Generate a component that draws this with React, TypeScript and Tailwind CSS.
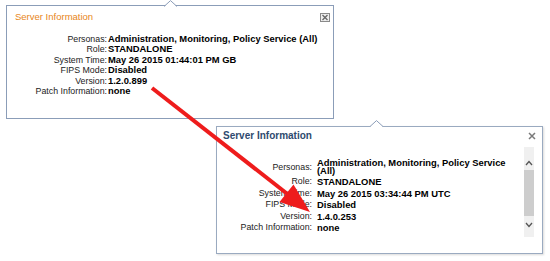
import React from "react";

const font = "font-['Liberation_Sans',Arial,sans-serif]";

const oldRows = [
  ["Personas:", "Administration, Monitoring, Policy Service (All)"],
  ["Role:", "STANDALONE"],
  ["System Time:", "May 26 2015 01:44:01 PM GB"],
  ["FIPS Mode:", "Disabled"],
  ["Version:", "1.2.0.899"],
  ["Patch Information:", "none"],
];

const newRows = [
  ["Role:", "STANDALONE"],
  ["System Time:", "May 26 2015 03:34:44 PM UTC"],
  ["FIPS Mode:", "Disabled"],
  ["Version:", "1.4.0.253"],
  ["Patch Information:", "none"],
];

const Notch = ({ className }: { className: string }) => (
  <svg className={`absolute ${className}`} width="13" height="7" viewBox="0 0 13 7">
    <polygon points="0,7 6.5,0.6 13,7" fill="#fff" />
    <polyline points="0,6.5 6.5,0.6 13,6.5" fill="none" stroke="#8b9db8" strokeWidth="1" />
  </svg>
);

const App = () => {
  return (
    <div className={`relative w-[550px] h-[261px] overflow-hidden bg-white ${font}`}>
      {/* old version popup */}
      <div className="relative ml-[6px] mt-[5px] w-[328px] h-[114px] border border-[#8b9db8] bg-white">
        <Notch className="-top-[6px] left-[157px]" />
        <div className="flex items-center justify-between pl-[8px] pr-[3px] pt-[5px]">
          <span className="text-[9.5px] leading-[12px] text-[#e8861a]">Server Information</span>
          <svg width="10" height="9" viewBox="0 0 10 9">
            <rect x="0.5" y="0.5" width="9" height="8" fill="#eee" stroke="#8a8a8a" />
            <path d="M2.5 2 L7.5 7 M7.5 2 L2.5 7" stroke="#666" strokeWidth="1.3" />
          </svg>
        </div>
        <div className="mt-[11px] grid grid-cols-[92px_1fr] gap-x-[1px] pl-[8px]">
          {oldRows.map(([k, v]) => (
            <React.Fragment key={k}>
              <span className="text-right text-[8.8px] leading-[10.4px] text-[#222]">{k}</span>
              <span className="whitespace-nowrap text-[9.4px] font-bold leading-[10.4px] text-black">{v}</span>
            </React.Fragment>
          ))}
        </div>
      </div>

      {/* new version popup */}
      <div className="relative ml-[216px] mt-[7px] flex w-[327px] h-[128px] border border-[#9aaac0] bg-white shadow-[1px_1px_2px_rgba(0,0,0,0.15)]">
        <Notch className="-top-[7px] left-[153px]" />
        <div className="flex-1 pl-[6px] pt-[3px]">
          <div className="text-[10px] font-bold leading-[12px] text-[#2e4a6e]">Server Information</div>
          <div className="mt-[17px] grid grid-cols-[89px_196px] gap-x-[5px]">
            <span className="self-center text-right text-[8.8px] leading-[11px] text-[#222]">Personas:</span>
            <span className="mb-[2px] text-[9.4px] font-bold leading-[7.5px] text-black">
              Administration, Monitoring, Policy Service (All)
            </span>
            {newRows.map(([k, v]) => (
              <React.Fragment key={k}>
                <span className="text-right text-[8.8px] leading-[11.5px] text-[#222]">{k}</span>
                <span className="whitespace-nowrap text-[9.4px] font-bold leading-[11.5px] text-black">{v}</span>
              </React.Fragment>
            ))}
          </div>
        </div>
        <div className="flex flex-col items-end pr-[6px] pt-[5px]">
          <svg width="8" height="8" viewBox="0 0 8 8">
            <path d="M1 1 L7 7 M7 1 L1 7" stroke="#7a7a7a" strokeWidth="1.5" />
          </svg>
          <div className="mr-[2px] mt-[7px] flex h-[90px] w-[10px] flex-col items-center bg-[#f0f0f0]">
            <svg className="mt-[13px]" width="8" height="6" viewBox="0 0 8 6">
              <path d="M1 5 L4 1.5 L7 5" fill="none" stroke="#555" strokeWidth="1.3" />
            </svg>
            <div className="mt-[4px] h-[46px] w-[10px] bg-[#cdcdcd]" />
            <svg className="mt-[6px]" width="8" height="6" viewBox="0 0 8 6">
              <path d="M1 1 L4 4.5 L7 1" fill="none" stroke="#555" strokeWidth="1.3" />
            </svg>
          </div>
        </div>
      </div>

      {/* red arrow overlay */}
      <svg className="pointer-events-none absolute left-0 top-0" width="550" height="261" viewBox="0 0 550 261">
        <line x1="152" y1="88" x2="290" y2="196" stroke="#ee1c1c" strokeWidth="4" />
        <polygon points="310,212 279.5,202 293.5,184.5" fill="#ee1c1c" />
      </svg>
    </div>
  );
};

export default App;
